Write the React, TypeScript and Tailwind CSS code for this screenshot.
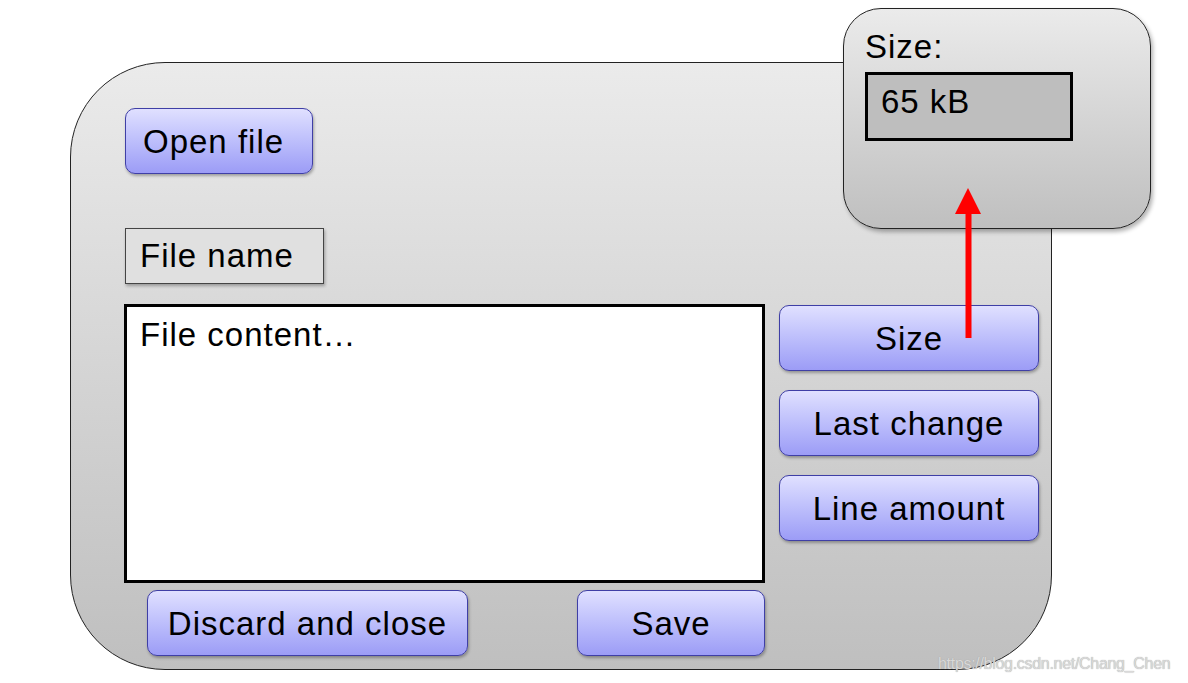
const btn =
  "flex items-center justify-center rounded-[10px] border border-[#3f3fa6] bg-gradient-to-b from-[#e0e0ff] to-[#9c9cf6] text-[33px] tracking-[1px] leading-none text-black shadow-[1px_2px_3px_rgba(0,0,0,0.3)]";

function SideButton({ label }: { label: string }) {
  return <div className={`${btn} h-[66px] w-[260px]`}>{label}</div>;
}

export default function App() {
  return (
    <div
      className="relative h-[683px] w-[1188px] overflow-hidden bg-white"
      style={{ fontFamily: '"Liberation Sans", Arial, sans-serif' }}
    >
      {/* main window */}
      <div className="ml-[70px] mt-[62px] flex h-[608px] w-[982px] flex-col rounded-[95px] border border-[#222] bg-gradient-to-b from-[#ebebeb] to-[#bfbfbf] pl-[53px] pt-[45px]">
        <div className={`${btn} ml-px h-[66px] w-[188px] justify-start pl-[17px]`}>Open file</div>

        <div className="ml-px mt-[54px] flex h-[56px] w-[199px] items-center border border-[#444] bg-[#e0e0e0] pl-[14px] text-[33px] tracking-[1px] text-black shadow-[1px_2px_3px_rgba(0,0,0,0.3)]">
          File name
        </div>

        <div className="mt-[20px] flex gap-[14px]">
          <div className="h-[279px] w-[641px] border-[3px] border-black bg-white pl-[13px] pt-[10px] text-[33px] tracking-[1px] leading-[36px] text-black">
            File content…
          </div>
          <div className="flex flex-col gap-[19px] pt-[1px]">
            <SideButton label="Size" />
            <SideButton label="Last change" />
            <SideButton label="Line amount" />
          </div>
        </div>

        <div className="mt-[7px] flex">
          <div className={`${btn} ml-[23px] h-[66px] w-[321px]`}>Discard and close</div>
          <div className={`${btn} ml-[109px] h-[66px] w-[188px]`}>Save</div>
        </div>
      </div>

      {/* size popup */}
      <div className="absolute left-[843px] top-[8px] h-[221px] w-[308px] rounded-[38px] border border-[#222] bg-gradient-to-b from-[#ebebeb] to-[#bfbfbf] pl-[21px] pt-[19px] shadow-[2px_3px_4px_rgba(0,0,0,0.3)]">
        <div className="text-[33px] tracking-[1px] leading-[38px] text-black">Size:</div>
        <div className="mt-[6px] flex h-[69px] w-[208px] items-start border-[3px] border-black bg-[#bebebe] pl-[13px] pt-[9px] text-[33px] tracking-[1px] leading-[36px] text-black">
          65 kB
        </div>
      </div>

      {/* red arrow */}
      <svg className="absolute left-[950px] top-[184px]" width="36" height="156" viewBox="0 0 36 156">
        <rect x="15.5" y="26" width="6" height="128" fill="#ff0000" />
        <polygon points="18,4 31,30 5,30" fill="#ff0000" />
      </svg>

      {/* watermark */}
      <div className="absolute left-[938px] top-[652px] text-[16px] tracking-[-0.3px] text-[#d9d9d9] [text-shadow:0_0_1px_#9a9a9a]">
        https://blog.csdn.net/Chang_Chen
      </div>
    </div>
  );
}
